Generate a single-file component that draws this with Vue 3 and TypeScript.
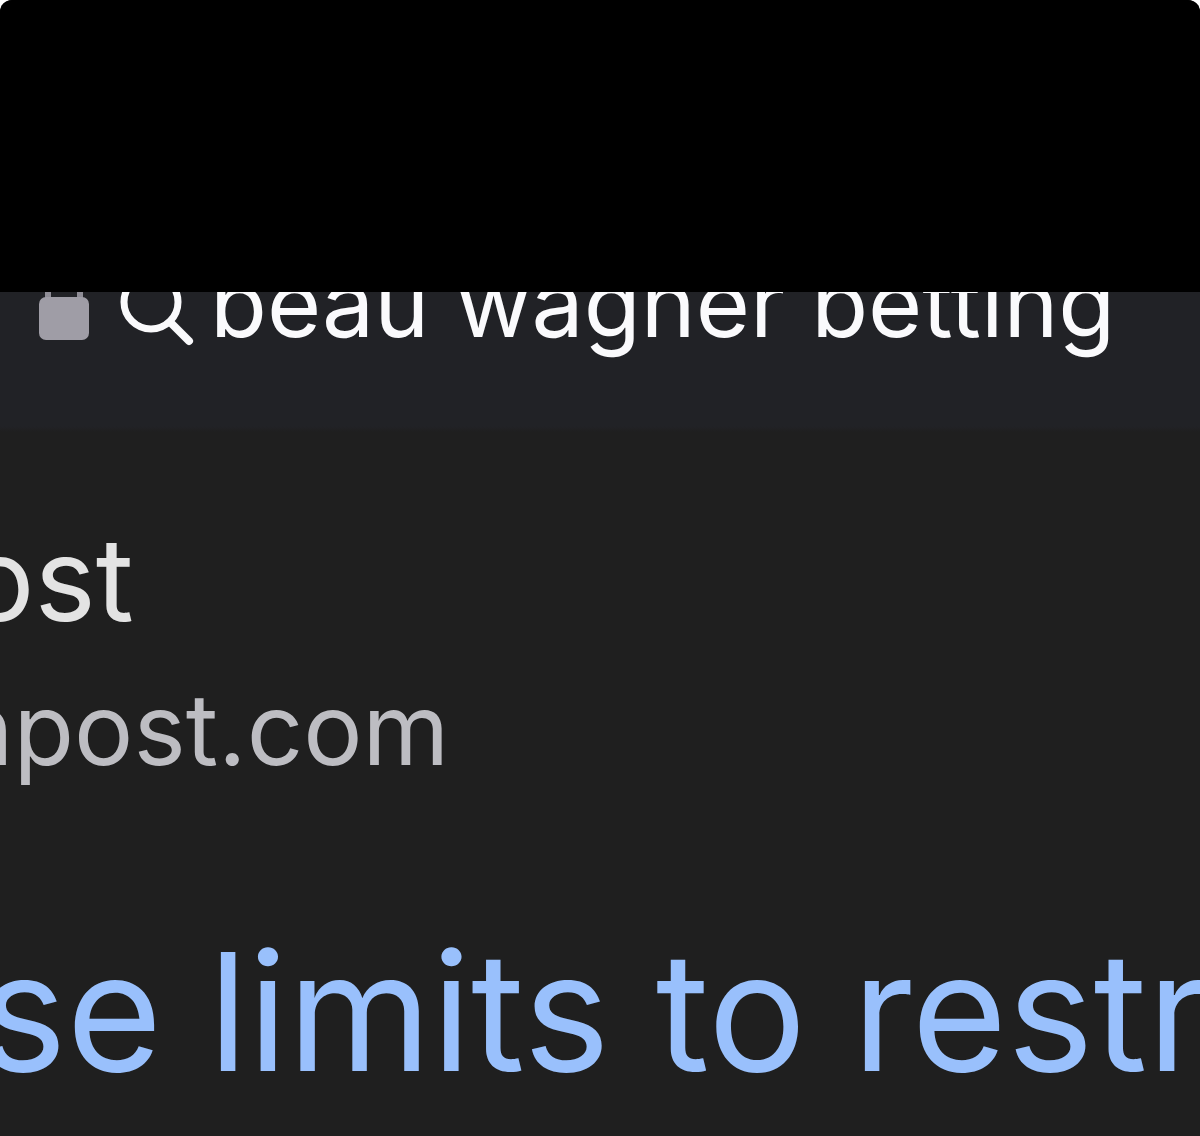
<script setup lang="ts">
import { ref } from 'vue'

const query = ref<string>('beau wagner betting')

const result = {
  site: 'ost',
  domain: 'npost.com',
  title: 'se limits to restr',
}
</script>

<template>
  <main class="page">
    <div class="redacted"></div>

    <form class="address" role="search" @submit.prevent>
      <div class="address-row">
        <svg class="lock" viewBox="0 0 52 112" aria-hidden="true">
          <path d="M10 50V36a16 16 0 0 1 32 0v14" fill="none" stroke="#8f8d96" stroke-width="6" />
          <rect x="1" y="49" width="50" height="43" rx="7" fill="#9f9da6" />
        </svg>
        <label class="glass" for="query" aria-label="Search">
          <svg viewBox="0 0 76 112" aria-hidden="true">
            <circle cx="31" cy="54" r="27" fill="none" stroke="#fafafc" stroke-width="7" />
            <path d="M51 75L69 93" fill="none" stroke="#fafafc" stroke-width="8" stroke-linecap="round" />
          </svg>
        </label>
        <input id="query" v-model="query" class="query" type="text" spellcheck="false" autocomplete="off" />
      </div>
    </form>

    <article class="result">
      <div class="site">{{ result.site }}</div>
      <div class="domain">{{ result.domain }}</div>
      <h3 class="title"><a href="#">{{ result.title }}</a></h3>
    </article>
  </main>
</template>

<style>
body {
  margin: 0;
  background: #fff;
}
</style>

<style scoped>
.page {
  overflow: hidden;
  border-radius: 12px 12px 0 0;
  background: #1f1f1f;
  font-family: Inter, "Liberation Sans", sans-serif;
  white-space: nowrap;
}

.redacted {
  height: 292px;
  background: #000;
}

/* The row is taller than the visible bar, so its top is cut off */
.address {
  display: flex;
  align-items: flex-end;
  box-sizing: border-box;
  height: 140px;
  padding: 0 0 72px 38px;
  overflow: hidden;
  background: linear-gradient(#212226 96%, #1f1f1f);
}

.address-row {
  display: flex;
  flex: 1;
  height: 112px;
}

.lock {
  flex: none;
  width: 52px;
  height: 112px;
  margin-right: 30px;
}

.glass {
  flex: none;
  width: 76px;
  height: 112px;
  margin-right: 14px;
}

.glass svg {
  display: block;
  width: 100%;
  height: 100%;
}

.query {
  flex: 1;
  min-width: 0;
  height: 110px;
  padding: 0;
  border: 0;
  outline: 0;
  background: transparent;
  color: #fafafc;
  font: 400 93px/110px Inter, "Liberation Sans", sans-serif;
}

.result {
  padding: 77px 0 24px;
}

.site {
  margin-left: -35px;
  color: #e3e3e3;
  font-size: 116px;
  line-height: 140px;
}

.domain {
  margin: 22px 0 0 -45px;
  color: #bdbdc2;
  font-size: 99px;
  line-height: 116px;
}

.title {
  margin: 125px 0 0 -20px;
  font-size: 164px;
  font-weight: 400;
  line-height: 200px;
}

.title a {
  color: #99c0fc;
  text-decoration: none;
}
</style>
